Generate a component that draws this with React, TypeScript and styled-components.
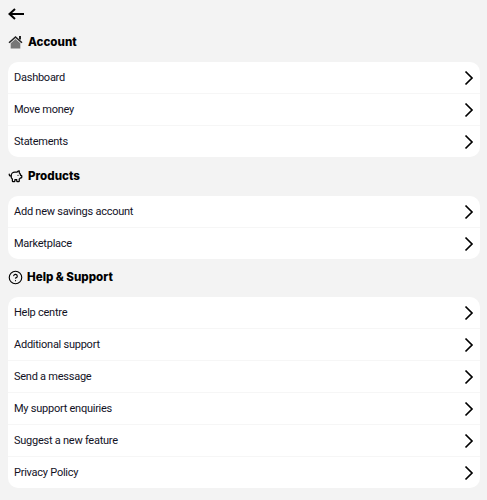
import styled, { createGlobalStyle } from 'styled-components';
import { Fragment } from 'react';
import { PiggyBank, CircleHelp } from 'lucide-react';

const GlobalStyle = createGlobalStyle`
    html, body {
        margin: 0;
        padding: 0;
        background-color: #f3f3f3;
    }
`;

const Page = styled.div`
    width: 487px;
    height: 500px;
    overflow: hidden;
    box-sizing: border-box;
    padding: 4px 7px 0 8px;
    font-family: "Roboto", "Liberation Sans", sans-serif;
    color: #0a0a14;
`;

const BackButton = styled.div`
    display: flex;
    align-items: center;
    height: 20px;
`;

const SectionTitle = styled.div<{ $gap: number; $top: number }>`
    display: flex;
    align-items: center;
    gap: ${({ $gap }) => $gap}px;
    height: 20px;
    margin-top: ${({ $top }) => $top}px;
    margin-bottom: 10px;
    font-family: "Inter", sans-serif;
    font-weight: 800;
    font-size: 11.6px;
    color: #000;
`;

const Card = styled.div`
    background-color: #fff;
    border-radius: 10px;
    overflow: hidden;
`;

const Row = styled.div`
    display: flex;
    align-items: center;
    justify-content: space-between;
    box-sizing: border-box;
    height: 32px;
    padding: 0 6px 0 6px;
    font-size: 11px;
    letter-spacing: -0.25px;
    color: #12121f;
    border-top: 1px solid #f6f6f6;

    &:first-child {
        height: 31px;
        border-top: none;
    }
`;

const BackArrow = () => (
    <svg width="16" height="12" viewBox="0 0 16 12" fill="none" stroke="#000" strokeWidth="2">
        <path d="M7 1 L1.5 6 L7 11 M1.5 6 H16" />
    </svg>
);

const Chevron = () => (
    <svg width="10" height="16" viewBox="0 0 10 16" fill="none" stroke="#000" strokeWidth="1.7">
        <path d="M1.5 1.5 L8 8 L1.5 14.5" />
    </svg>
);

const HomeIcon = () => (
    <svg width="15" height="14" viewBox="0 0 15 14">
        <path d="M7.5 1 L14.5 7.2 L13.4 8.2 L7.5 3 L1.6 8.2 L.5 7.2 Z" fill="#222" />
        <rect x="11" y="1" width="2" height="3.5" fill="#222" />
        <path d="M2.7 8.2 L7.5 4 L12.3 8.2 V13.5 H2.7 Z" fill="#777" />
    </svg>
);

const sections = [
    { title: 'Account', icon: <HomeIcon />, gap: 5, top: 8, items: ['Dashboard', 'Move money', 'Statements'] },
    { title: 'Products', icon: <PiggyBank size={15} strokeWidth={2} color="#000" />, gap: 5, top: 9, items: ['Add new savings account', 'Marketplace'] },
    { title: 'Help & Support', icon: <CircleHelp size={15} strokeWidth={1.8} color="#000" />, gap: 4, top: 8, items: ['Help centre', 'Additional support', 'Send a message', 'My support enquiries', 'Suggest a new feature', 'Privacy Policy'] },
];

const App = () => {
    return <Page>
        <GlobalStyle />
        <BackButton><BackArrow /></BackButton>
        {sections.map(section => <Fragment key={section.title}>
            <SectionTitle $gap={section.gap} $top={section.top}>{section.icon}{section.title}</SectionTitle>
            <Card>
                {section.items.map(item => <Row key={item}>
                    {item}
                    <Chevron />
                </Row>)}
            </Card>
        </Fragment>)}
    </Page>;
}

export default App;
